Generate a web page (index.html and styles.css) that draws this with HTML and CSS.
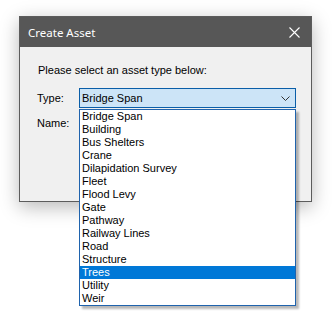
FILE: index.html
```html
<!DOCTYPE html>
<html lang="en">
<head>
  <meta charset="UTF-8">
  <title>Create Asset</title>
  <link rel="stylesheet" href="styles.css">
</head>
<body>

  <div class="dialog">
    <div class="title-bar">
      <span class="title">Create Asset</span>
      <svg class="close" width="11" height="11" viewBox="0 0 11 11">
        <path d="M0.5 0.5 L10.5 10.5 M10.5 0.5 L0.5 10.5" stroke="#fff" stroke-width="1.1" fill="none"/>
      </svg>
    </div>

    <div class="dialog-body">
      <p class="prompt">Please select an asset type below:</p>

      <div class="form-row">
        <label class="label">Type:</label>
        <div class="combo">
          <span>Bridge Span</span>
          <svg class="chevron" width="9" height="5" viewBox="0 0 9 5">
            <path d="M0.5 0.5 L4.5 4.5 L8.5 0.5" stroke="#333" stroke-width="1" fill="none"/>
          </svg>
        </div>
      </div>

      <div class="form-row name-row">
        <label class="label">Name:</label>
        <div class="textbox"></div>
      </div>
    </div>

    <ul class="dropdown">
      <li>Bridge Span</li>
      <li>Building</li>
      <li>Bus Shelters</li>
      <li>Crane</li>
      <li>Dilapidation Survey</li>
      <li>Fleet</li>
      <li>Flood Levy</li>
      <li>Gate</li>
      <li>Pathway</li>
      <li>Railway Lines</li>
      <li>Road</li>
      <li>Structure</li>
      <li class="selected">Trees</li>
      <li>Utility</li>
      <li>Weir</li>
    </ul>
  </div>

</body>
</html>
```

FILE: styles.css
```css
html, body {
  min-height: 319px;
}

body {
  margin: 0;
  padding: 16px 0 0 19px;
  box-sizing: border-box;
  background: #fff;
  font-family: "Liberation Sans", Arial, sans-serif;
  font-size: 11px;
  color: #000;
}

.dialog {
  position: relative;
  width: 291px;
  height: 184px;
  border: 1px solid #5c5c5c;
  background: #f0f0f0;
  box-shadow: 0 5px 18px rgba(0, 0, 0, 0.28);
}

.title-bar {
  height: 30px;
  background: #575757;
  display: flex;
  align-items: center;
  justify-content: space-between;
  padding: 0 11px 0 8px;
}

.title {
  color: #fff;
  font-family: "Noto Sans", sans-serif;
  font-size: 11.5px;
}

.close {
  display: block;
}

.dialog-body {
  padding: 17px 0 0 17px;
}

.prompt {
  margin: 0 0 0 1px;
  line-height: 13px;
}

.form-row {
  display: flex;
  align-items: center;
  margin-top: 11px;
}

.name-row {
  margin-top: 5px;
}

.label {
  width: 42px;
  line-height: 13px;
}

.combo {
  box-sizing: border-box;
  width: 217px;
  height: 20px;
  border: 1px solid #0a5ea8;
  background: #cce4f7;
  display: flex;
  align-items: center;
  justify-content: space-between;
  padding: 0 5px 0 2px;
}

.textbox {
  box-sizing: border-box;
  width: 217px;
  height: 20px;
  border: 1px solid #7a7a7a;
  background: #fff;
}

.dropdown {
  position: absolute;
  left: 59px;
  top: 92px;
  width: 215px;
  margin: 0;
  padding: 0;
  list-style: none;
  background: #fff;
  border: 1px solid #1f63ad;
  box-shadow: 3px 3px 2px rgba(0, 0, 0, 0.28);
}

.dropdown li {
  height: 13px;
  line-height: 13px;
  padding-left: 2px;
}

.dropdown .selected {
  background: #0078d7;
  color: #fff;
}
```
